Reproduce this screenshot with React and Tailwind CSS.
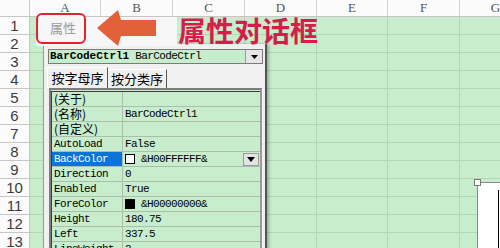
import React from "react";

const cols = [
  { l: "A", w: "w-[71px]" },
  { l: "B", w: "w-[72px]" },
  { l: "C", w: "w-[72px]" },
  { l: "D", w: "w-[72px]" },
  { l: "E", w: "w-[71px]" },
  { l: "F", w: "w-[72px]" },
  { l: "G", w: "w-[72px]" },
];

const rows = [1, 2, 3, 4, 5, 6, 7, 8, 9, 10, 11, 12, 13];

const props = [
  { name: "(关于)", cjk: true, value: "" },
  { name: "(名称)", cjk: true, value: "BarCodeCtrl1" },
  { name: "(自定义)", cjk: true, value: "" },
  { name: "AutoLoad", value: "False" },
  { name: "BackColor", value: "&H00FFFFFF&", swatch: "white", selected: true },
  { name: "Direction", value: "0" },
  { name: "Enabled", value: "True" },
  { name: "ForeColor", value: "&H00000000&", swatch: "black" },
  { name: "Height", value: "180.75" },
  { name: "Left", value: "337.5" },
  { name: "LineWeight", value: "2" },
];

const mono = { fontFamily: '"Liberation Mono", "Noto Sans CJK SC", monospace' };
const cjk = { fontFamily: '"Noto Sans CJK SC", "Liberation Sans", sans-serif' };

function Sheet() {
  return (
    <div className="flex flex-col">
      <div className="flex h-[17px] shrink-0 bg-[#fbfbfb] border-b border-[#c6c6c6]">
        <div className="w-[30px] shrink-0 border-r border-[#c6c6c6]" />
        {cols.map((c) => (
          <div
            key={c.l}
            className={`${c.w} shrink-0 border-r border-[#d4d4d4] text-center text-[13px] leading-[15px] text-[#555]`}
            style={{ fontFamily: '"Liberation Serif", serif' }}
          >
            {c.l}
          </div>
        ))}
      </div>
      {rows.map((n) => (
        <div key={n} className="flex h-[18px] shrink-0">
          <div
            className="w-[30px] shrink-0 bg-[#fbfbfb] border-r border-b border-[#c6c6c6] text-center text-[15px] leading-[17px] text-[#3a3a3a]"
            style={{ fontFamily: '"Liberation Sans", sans-serif' }}
          >
            {n}
          </div>
          {cols.map((c) => (
            <div key={c.l} className={`${c.w} shrink-0 border-r border-b border-[#b3d6b7]`} />
          ))}
        </div>
      ))}
    </div>
  );
}

function PropRow({ p }) {
  return (
    <div className="flex h-[15px] border-b border-[#a9bfac]">
      <div
        className={`w-[71px] shrink-0 border-r border-[#a9bfac] pl-[2px] overflow-hidden whitespace-nowrap ${
          p.selected ? "bg-[#0a74da] text-white" : "text-black"
        } ${p.cjk ? "text-[12px] leading-[14px]" : "text-[11px] leading-[14px] tracking-[-0.6px]"}`}
        style={p.cjk ? cjk : mono}
      >
        {p.name}
      </div>
      <div className="flex flex-1 items-center pl-[2px] overflow-hidden whitespace-nowrap">
        {p.swatch === "white" && (
          <span className="mr-[6px] h-[10px] w-[10px] shrink-0 border border-black bg-white" />
        )}
        {p.swatch === "black" && (
          <span className="mr-[6px] h-[10px] w-[10px] shrink-0 border border-black bg-black" />
        )}
        <span className="text-[11px] leading-[14px] tracking-[-0.6px] text-black" style={mono}>
          {p.value}
        </span>
        {p.selected && (
          <span className="ml-auto mr-[1px] flex h-[13px] w-[16px] items-center justify-center border border-[#9a9a9a] bg-[#e4e4e4]">
            <svg width="8" height="5" viewBox="0 0 8 5">
              <polygon points="0,0 8,0 4,5" fill="#000" />
            </svg>
          </span>
        )}
      </div>
    </div>
  );
}

function PropertiesDialog() {
  return (
    <div className="absolute left-[43px] top-[44px] h-[212px] w-[224px] border-l border-[#9a9a9a] border-r-2 border-r-[#555] bg-[#f0f0f0] shadow-[2px_0_3px_rgba(0,0,0,0.25)]">
      <div className="ml-[4px] mt-[5px] flex h-[15px] w-[215px] border border-[#7a7a7a] bg-[#c7edcc]">
        <div className="flex-1 pl-[1px] text-[11px] leading-[13px] text-black whitespace-nowrap overflow-hidden" style={mono}>
          <span className="font-bold">BarCodeCtrl1</span>
          <span className="tracking-[-0.6px]"> BarCodeCtrl</span>
        </div>
        <div className="flex w-[17px] items-center justify-center border-l border-[#9a9a9a] bg-[#e6e6e6]">
          <svg width="7" height="4" viewBox="0 0 7 4">
            <polygon points="0,0 7,0 3.5,4" fill="#000" />
          </svg>
        </div>
      </div>
      <div className="ml-[3px] mt-[3px] flex h-[21px] items-end">
        <div
          className="flex h-[21px] w-[61px] items-center justify-center border-t border-l border-white border-r border-r-[#555] text-[13px] text-black"
          style={cjk}
        >
          按字母序
        </div>
        <div
          className="flex h-[19px] w-[59px] items-center justify-center border-t border-white border-r border-r-[#555] text-[13px] text-black"
          style={cjk}
        >
          按分类序
        </div>
      </div>
      <div className="ml-[5px] w-[213px] border-t-2 border-l-2 border-[#7d7d7d] border-r-2 border-r-[#9a9a9a] bg-[#c7edcc] pt-px">
        <div className="border-t border-l border-[#3c3c3c]">
          {props.map((p) => (
            <PropRow key={p.name} p={p} />
          ))}
        </div>
      </div>
    </div>
  );
}

export default function App() {
  return (
    <div className="relative h-[248px] w-[500px] overflow-hidden bg-[#c7edcc]">
      <Sheet />

      <PropertiesDialog />

      {/* title strip behind the annotation */}
      <div className="absolute left-[36px] top-[17px] h-[29px] w-[141px] bg-[#f6f6f6]" />

      <div
        className="absolute left-[36px] top-[13px] h-[31px] w-[50px] rounded-[6px] border-2 border-[#e2232f] bg-[#f6f6f6] pl-[12px] text-[13px] leading-[26px] text-[#9c9c9c]"
        style={cjk}
      >
        属性
      </div>

      <svg className="absolute left-[95px] top-[9px]" width="64" height="40" viewBox="0 0 64 40">
        <polygon points="2,19 23,1 26,11 61,11 61,27 26,27 23,37" fill="#e2613b" />
      </svg>

      <div
        className="absolute left-[178px] top-[17px] text-[28px] font-bold leading-[26px] text-[#d61c4b]"
        style={cjk}
      >
        属性对话框
      </div>

      {/* embedded object, bottom right */}
      <div className="absolute left-[477px] top-[182px] h-[80px] w-[40px] border-l border-t border-[#8a8a8a] bg-white">
        <div className="ml-[20px] mt-[7px] h-[70px] w-px bg-black" />
      </div>
      <div className="absolute left-[474px] top-[179px] h-[7px] w-[7px] border border-[#7a7a7a] bg-white" />
    </div>
  );
}
